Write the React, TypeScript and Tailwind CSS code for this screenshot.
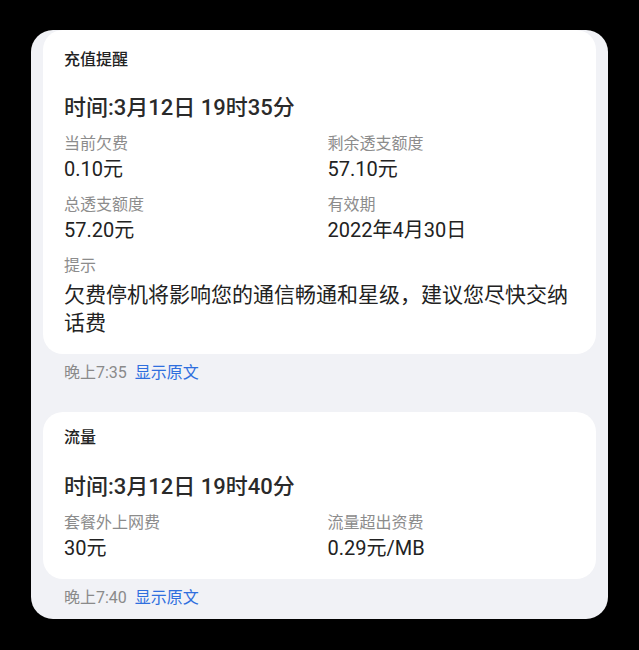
import React from "react";

const font = {
  fontFamily: 'Roboto, "Noto Sans CJK SC", "Noto Sans", sans-serif',
};

type Field = { label: string; value: string };

function FieldCell({ label, value }: Field) {
  return (
    <div className="flex flex-col">
      <span className="text-[16px] leading-[22px] text-[#8c8c8c]">{label}</span>
      <span className="text-[20px] leading-[28px] text-[#222222]">{value}</span>
    </div>
  );
}

function Footer({ time }: { time: string }) {
  return (
    <div className="flex items-center gap-2 px-[33px] text-[16px] leading-[22px]">
      <span className="text-[#8a8a8a]">{time}</span>
      <span className="text-[#2f6fde]">显示原文</span>
    </div>
  );
}

export default function App() {
  return (
    <div className="w-[639px] h-[650px] bg-black pt-[30px] pl-[31px]" style={font}>
      <div className="w-[577px] h-[589px] bg-[#f1f2f6] rounded-[22px] overflow-hidden">
        {/* 充值提醒 */}
        <div className="mx-3 bg-white rounded-[20px] px-[21px] pt-[19px] pb-[17px]">
          <div className="text-[16px] leading-[22px] font-medium text-[#222222]">充值提醒</div>
          <div className="mt-[22px] text-[22px] leading-[30px] font-medium text-[#2a2a2a]">
            时间:3月12日 19时35分
          </div>
          <div className="mt-[10px] grid grid-cols-2 gap-y-[11px]">
            <FieldCell label="当前欠费" value="0.10元" />
            <div className="pl-[8px]">
              <FieldCell label="剩余透支额度" value="57.10元" />
            </div>
            <FieldCell label="总透支额度" value="57.20元" />
            <div className="pl-[8px]">
              <FieldCell label="有效期" value="2022年4月30日" />
            </div>
          </div>
          <div className="mt-[11px] text-[16px] leading-[22px] text-[#8c8c8c]">提示</div>
          <div className="mt-[4px] text-[21px] leading-[28px] text-[#222222]">
            欠费停机将影响您的通信畅通和星级，建议您尽快交纳话费
          </div>
        </div>
        <div className="mt-2">
          <Footer time="晚上7:35" />
        </div>

        {/* 流量 */}
        <div className="mx-3 mt-[28px] bg-white rounded-[20px] px-[21px] pt-[15px] pb-[17px]">
          <div className="text-[16px] leading-[22px] font-medium text-[#222222]">流量</div>
          <div className="mt-[23px] text-[22px] leading-[30px] font-medium text-[#2a2a2a]">
            时间:3月12日 19时40分
          </div>
          <div className="mt-[10px] grid grid-cols-2">
            <FieldCell label="套餐外上网费" value="30元" />
            <div className="pl-[8px]">
              <FieldCell label="流量超出资费" value="0.29元/MB" />
            </div>
          </div>
        </div>
        <div className="mt-2">
          <Footer time="晚上7:40" />
        </div>
      </div>
    </div>
  );
}
